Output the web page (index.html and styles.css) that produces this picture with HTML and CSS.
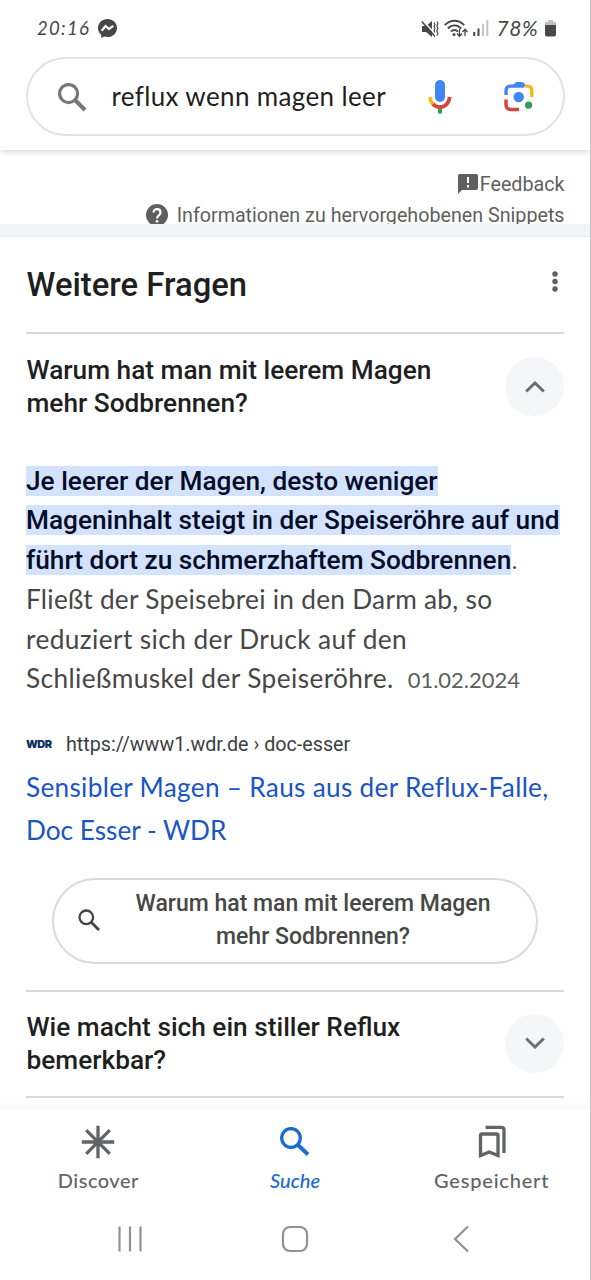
FILE: index.html
```html
<!DOCTYPE html>
<html lang="de">
<head>
<meta charset="utf-8">
<title>reflux wenn magen leer</title>
<link rel="stylesheet" href="styles.css">
</head>
<body>
<div class="phone">
  <header class="top">
    <div class="status">
      <span class="clock">20:16</span>
      <svg class="messenger" width="19" height="19" viewBox="0 0 19 19"><path d="M9.500 0C4.200 0 0 3.900 0 9c0 2.800 1.200 5 3.200 6.700V19l3-1.400c1 .3 2.200.5 3.300.5 5.300 0 9.500-3.900 9.500-9.100S14.800 0 9.500 0z" fill="#474747"/><path d="M3.600 11.800 7.600 7l3.400 3 4.300-3.100" fill="none" stroke="#fff" stroke-width="2.200"/></svg>
      <span class="spacer"></span>
      <svg class="mute" width="18" height="18" viewBox="0 0 18 18"><path d="M1 6h4l6-5v16l-6-5H1z" fill="#474747"/><path d="M1.800.2l14 15.700" stroke="#fff" stroke-width="1.500"/><path d="M.8 1.500 14 16.500" stroke="#474747" stroke-width="1.500"/><path d="M13 2.500l1 2-1 2 1 2-1 2 1 2M15.800 1.500l1.200 2-1.200 2.500 1.200 2.500-1.200 2.500 1.200 2.500-1.200 2" fill="none" stroke="#474747" stroke-width="1.200"/></svg>
      <svg class="wifi" width="24" height="19" viewBox="0 0 24 19"><g fill="none" stroke="#474747" stroke-width="1.900"><path d="M.8 6.200C6.300.2 14.700.2 20.200 6.200M3.800 9.500c4-4.200 9.400-4.200 13.400 0M7 12.600c2.200-2.200 4.800-2.200 7 0"/></g><circle cx="10" cy="15.500" r="1.500" fill="#474747"/><path d="M15.500 10v7m-2.500-2.500 2.500 2.700 2.500-2.700M21 17v-6.500m-2.500 2.500 2.500-2.700 2.500 2.700" fill="none" stroke="#474747" stroke-width="1.300"/></svg>
      <svg class="signal" width="16" height="17" viewBox="0 0 16 17"><path d="M1.200 12v4M5.500 8.500V16" stroke="#474747" stroke-width="2"/><path d="M10 4v12M14.300 0v16" stroke="#c4c4c4" stroke-width="2"/></svg>
      <span class="percent">78%</span>
      <svg class="battery" width="11" height="17" viewBox="0 0 11 17"><path d="M3 0h5v2h3v4H0V2h3z" fill="#c0c0c0"/><path d="M0 5h11v9.500q0 2-2 2H2q-2 0-2-2z" fill="#474747"/></svg>
    </div>
    <div class="searchbox">
      <svg class="magnifier" width="30" height="30" viewBox="0 0 30 30" fill="none" stroke="#777" stroke-width="3.200"><circle cx="11.600" cy="11.600" r="9"/><path d="M18 18l10 10" stroke-width="4"/></svg>
      <span class="query">reflux wenn magen leer</span>
      <svg class="mic" width="24" height="34" viewBox="0 0 24 34"><rect x="7" y="0" width="10" height="22" rx="5" fill="#4285f4"/><path d="M10 27h4v6.500h-4z" fill="#34a050"/><path d="M2.200 17c0 3.500 1.200 6 3.400 7.800" fill="none" stroke="#f4b91a" stroke-width="3.800"/><path d="M5 24c3.800 4.200 10 4.200 13.800 0 1.800-2 2.700-4 2.900-7" fill="none" stroke="#d6453b" stroke-width="3.800"/></svg>
      <svg class="lens" width="30" height="31" viewBox="0 0 30 31" fill="none" stroke-width="3.400"><path d="M2 14v-4.200q0-4.700 4.700-4.700H20" stroke="#4285f4"/><path d="M8 5.500 11 1.800Q12 1 13.500 1h4q1.500 0 2.500 1l2.500 3.500z" fill="#4285f4"/><path d="M21 5.100h2.500q4.300 0 4.300 4.700V16" stroke="#f4b91a"/><path d="M2 18.500v5q0 5 5 5h8" stroke="#d6453b"/><circle cx="14.700" cy="16" r="5.200" fill="#4285f4"/><circle cx="24.600" cy="24.200" r="3.600" fill="#34a050"/></svg>
    </div>
  </header>

  <main class="content">
    <section class="snippet-links">
      <div class="link-row"><svg width="20" height="20" viewBox="0 0 20 20"><path d="M2 0h16q2 0 2 2v12q0 2-2 2H4l-4 4V2q0-2 2-2z" fill="#5f5f5f"/><path d="M10 3v6M10 11v2.500" stroke="#fff" stroke-width="2"/></svg><span class="feedback">Feedback</span></div>
      <div class="link-row info"><svg width="22" height="22" viewBox="0 0 22 22"><circle cx="11" cy="11" r="11" fill="#5f5f5f"/><path d="M7.500 8.500c0-4.500 7-4.500 7 0 0 3-3.500 3-3.500 6" fill="none" stroke="#fff" stroke-width="2.200"/><circle cx="11" cy="17.300" r="1.400" fill="#fff"/></svg><span class="about">Informationen zu hervorgehobenen Snippets</span></div>
    </section>
    <div class="band"></div>
    <section class="questions">
      <div class="heading">
        <h1>Weitere Fragen</h1>
        <svg class="dots" width="6" height="22" viewBox="0 0 6 22" fill="#5f5f5f"><circle cx="3" cy="3" r="2.700"/><circle cx="3" cy="10.500" r="2.700"/><circle cx="3" cy="18" r="2.700"/></svg>
      </div>
      <div class="question first">
        <h2>Warum hat man mit leerem Magen<br>mehr Sodbrennen?</h2>
        <span class="toggle"><svg width="20" height="12" viewBox="0 0 20 12" fill="none" stroke="#6e6e6e" stroke-width="3"><path d="M1.200 10.500 10 2l8.800 8.500"/></svg></span>
      </div>
      <div class="answer">
        <p class="line"><mark>Je leerer der Magen, desto weniger</mark></p>
        <p class="line"><mark>Mageninhalt steigt in der Speiseröhre auf und</mark></p>
        <p class="line"><mark>führt dort zu schmerzhaftem Sodbrennen</mark>.</p>
        <p class="line plain">Fließt der Speisebrei in den Darm ab, so</p>
        <p class="line plain wide">reduziert sich der Druck auf den</p>
        <p class="line plain wide">Schließmuskel der Speiseröhre.<span class="date">01.02.2024</span></p>
      </div>
      <div class="source"><span class="wdr">WDR</span><span class="url">https://www1.wdr.de › doc-esser</span></div>
      <a class="result"><span class="r1">Sensibler Magen – Raus aus der Reflux-Falle,</span><br><span class="r2">Doc Esser - WDR</span></a>
      <div class="chip">
        <svg width="22" height="22" viewBox="0 0 22 22" fill="none" stroke="#444" stroke-width="2.300"><circle cx="8.300" cy="8.300" r="6.800"/><path d="M13 13l8 8" stroke-width="2.800"/></svg>
        <span class="chip-text">Warum hat man mit leerem Magen<br>mehr Sodbrennen?</span>
      </div>
      <div class="question second">
        <h2>Wie macht sich ein stiller Reflux<br>bemerkbar?</h2>
        <span class="toggle"><svg width="20" height="12" viewBox="0 0 20 12" fill="none" stroke="#6e6e6e" stroke-width="3"><path d="M1.200 1.500 10 10l8.800-8.500"/></svg></span>
      </div>
    </section>
  </main>

  <nav class="tabs">
    <div class="tab"><svg width="34" height="34" viewBox="0 0 34 34" stroke="#616366" stroke-width="3.300"><path d="M17 .8v32.400M.8 17h32.400M5.200 5.200l23.600 23.600M28.800 5.200 5.200 28.800"/></svg><span class="discover">Discover</span></div>
    <div class="tab active"><svg width="34" height="34" viewBox="0 0 34 34" fill="none" stroke="#1a6ad4" stroke-width="3.300"><circle cx="13" cy="13" r="9.300"/><path d="M20 20l10 9.500" stroke-width="3.800"/></svg><span class="suche">Suche</span></div>
    <div class="tab"><svg width="34" height="34" viewBox="0 0 34 34" fill="none" stroke="#616366" stroke-width="3.300"><path d="M5.500 30.500V10.500Q5.500 9 7 9h14.500Q23 9 23 10.500v20L14.250 27z"/><path d="M10.500 2.300h16q2.500 0 2.500 2.500V28"/></svg><span class="saved">Gespeichert</span></div>
  </nav>
  <div class="sysnav">
    <svg width="26" height="28" viewBox="0 0 26 28" stroke="#919191" stroke-width="2.200"><path d="M2.500 1.500v25M13 1.500v25M23.500 1.500v25"/></svg>
    <svg width="28" height="28" viewBox="0 0 28 28" fill="none" stroke="#919191" stroke-width="2.200"><rect x="2" y="2" width="24" height="24" rx="7"/></svg>
    <svg width="26" height="28" viewBox="0 0 26 28" fill="none" stroke="#919191" stroke-width="2.200"><path d="M21 1.500 8 14l13 12.500"/></svg>
  </div>
</div>
</body>
</html>
```
FILE: styles.css
```css
* { box-sizing: border-box; }
body { margin: 0; background: #fff; font-family: Roboto, sans-serif; color: #1f1f1f; }
h1, h2, p { margin: 0; font-weight: 500; }
svg { display: block; flex: none; }
.phone { width: 591px; height: 1280px; display: flex; flex-direction: column; overflow: hidden; white-space: nowrap; border-right: 1px solid #c4c4c4; }

.top { height: 150px; flex: none; padding: 0 25.500px 0 26px; box-shadow: 0 1px 7px rgba(0, 0, 0, .2); background: #fff; z-index: 1; }
.status { height: 57px; padding: 0 9px 0 11px; display: flex; align-items: center; color: #474747; font-family: Lato, sans-serif; font-style: italic; }
.clock { font-size: 18.500px; letter-spacing: 1.300px; width: 61px; margin-top: -2px; }
.spacer { flex: 1; }
.wifi { margin-left: 5px; }
.signal { margin-left: 5px; }
.percent { width: 43px; margin: -2px 5px 0 8px; font-size: 21px; letter-spacing: .6px; }
.searchbox { height: 79px; border: 2px solid #e2e2e2; border-radius: 40px; display: flex; align-items: center; padding: 0 28px 0 28.500px; }
.query { font-family: Lato, sans-serif; font-size: 26px; letter-spacing: .36px; width: 276px; margin: -2px 40px 0 25px; }
.lens { margin-left: 52px; }

.content { flex: 1; min-height: 0; overflow: hidden; }
.snippet-links { height: 74px; overflow: hidden; padding: 18px 25.500px 0; color: #5f5f5f; font-size: 19.700px; }
.link-row { height: 31px; display: flex; justify-content: flex-end; align-items: center; }
.link-row span { padding-top: 1px; }
.feedback { margin-left: 2px; }
.about { margin-left: 9px; }
.band { height: 13px; background: #f1f3f4; border-bottom: 1px solid #e6e8ea; }
.questions { padding: 0 26px; }
.heading { height: 95px; display: flex; justify-content: space-between; align-items: center; padding-right: 6.500px; }
h1 { font-size: 32.800px; padding-left: .5px; }
.dots { margin-bottom: 5px; }
.question { display: flex; justify-content: space-between; border-top: 2px solid #d9d9d9; }
.question h2 { font-size: 26.240px; line-height: 33px; padding: 1px 0 0 .5px; }
.first { height: 129px; padding-top: 19px; }
.second { height: 108px; padding-top: 18px; border-bottom: 2px solid #d9d9d9; }
.toggle { width: 59px; height: 59px; border-radius: 50%; background: #f5f6f8; display: flex; align-items: center; justify-content: center; margin-top: 4px; }
.answer { height: 259px; padding-top: .6px; color: #474747; }
.line { height: 39.500px; font-weight: 400; font-size: 26.240px; line-height: 39.500px; }
.plain { font-family: Lato, sans-serif; letter-spacing: .27px; }
.wide { letter-spacing: .4px; }
mark { font-weight: 500; background: #d3e3fd; color: #040c28; }
.date { font-size: 22px; letter-spacing: 0; margin-left: 14px; color: #5e5e5e; }
.source { height: 46px; padding-top: 2px; display: flex; align-items: center; font-size: 19.700px; color: #3c4043; }
.wdr { width: 26px; margin-right: 14px; font: 900 11px Inter, sans-serif; letter-spacing: -.6px; color: #0a2f5c; }
.result { display: block; font: 26.200px/42.700px Lato, sans-serif; color: #1a55c4; height: 111.500px; }
.r1 { letter-spacing: .3px; }
.chip { margin: 0 26px 26px; height: 86px; border: 2px solid #dadada; border-radius: 43px; display: flex; align-items: center; padding: 0 0 2px 24px; }
.chip-text { flex: 1; text-align: center; font-weight: 500; font-size: 23px; line-height: 33px; color: #474747; padding-right: 10px; }

.tabs { height: 93px; flex: none; background: #fff; box-shadow: 0 -1px 8px rgba(0, 0, 0, .06); display: flex; justify-content: space-between; }
.tab { width: 196.800px; display: flex; flex-direction: column; align-items: center; padding-top: 16px; font: 500 20px/24px Lato, sans-serif; color: #616366; gap: 9px; }
.discover { letter-spacing: .5px; }
.saved { letter-spacing: .8px; }
.active { color: #1a6ad4; font-style: italic; }
.sysnav { height: 78px; flex: none; background: #fff; z-index: 1; display: flex; justify-content: space-between; padding: 23px 117px 0; }
```
